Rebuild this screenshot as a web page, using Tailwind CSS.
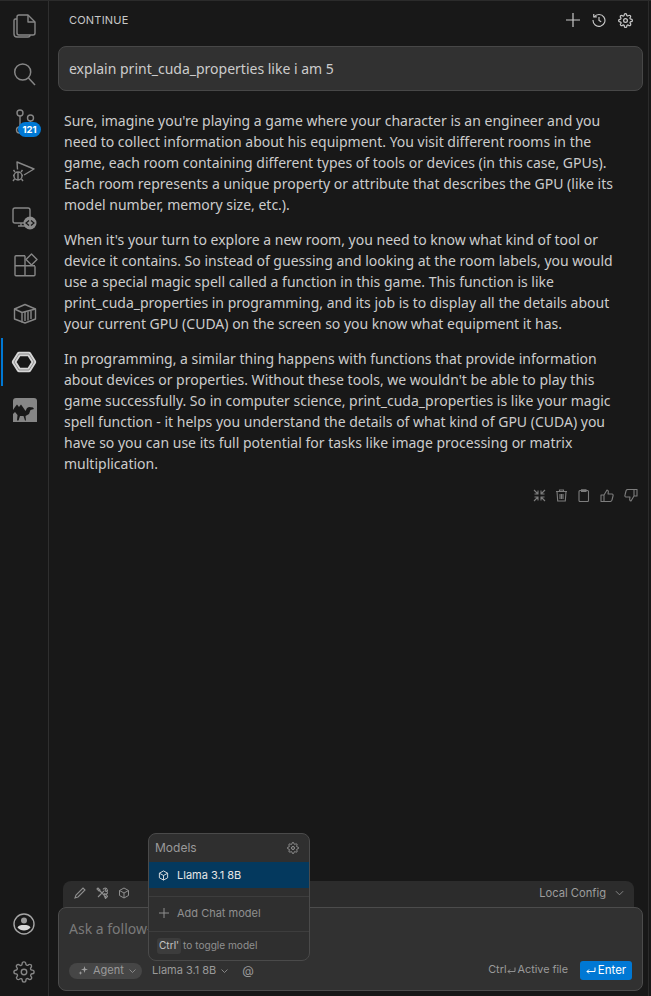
<!DOCTYPE html>
<html lang="en">
<head>
  <meta charset="UTF-8">
  <title>Continue</title>
  <script src="https://cdn.jsdelivr.net/npm/@tailwindcss/browser@4"></script>
</head>
<body class="bg-[#181818] overflow-hidden font-['Noto_Sans',sans-serif]">
<div class="flex h-[996px] w-[651px] border-t border-[#2b2b2b]">

  <!-- activity bar: 48px slots, icons drawn on a 28px box -->
  <nav class="w-[49px] shrink-0 h-full border-r border-[#2f2f2f] flex flex-col text-[#868686] relative">
    <div class="h-[48px] flex items-center justify-center">
      <svg width="28" height="28" viewBox="0 0 28 28" fill="none" stroke="currentColor" stroke-width="1.400" stroke-linejoin="round"><path d="M9 4h9l7 7v11a2 2 0 0 1-2 2H9a2 2 0 0 1-2-2V6a2 2 0 0 1 2-2z"/><path d="M18 4v7h7"/><path d="M7 8H5.500A1.500 1.500 0 0 0 4 9.500V23a3 3 0 0 0 3 3h11a2 2 0 0 0 2-2"/></svg>
    </div>
    <div class="h-[48px] flex items-center justify-center">
      <svg width="28" height="28" viewBox="0 0 28 28" fill="none" stroke="currentColor" stroke-width="1.500"><circle cx="12.700" cy="13" r="8"/><path d="M18.500 19l6.500 7"/></svg>
    </div>
    <div class="h-[48px] flex items-center justify-center">
      <div class="relative w-[28px] h-[28px]">
        <svg width="28" height="28" viewBox="0 0 28 28" fill="none" stroke="currentColor" stroke-width="1.400"><circle cx="10" cy="6" r="3"/><circle cx="20.500" cy="11" r="3"/><path d="M10 9v11"/><path d="M20.500 14c0 4-7 4-10 6"/><circle cx="9.500" cy="23" r="3"/></svg>
        <span class="absolute left-[8px] top-[15px] w-[23px] h-[15px] rounded-full bg-[#0078d4] text-white text-[9.500px] font-bold leading-[15px] text-center font-['Inter',sans-serif]">121</span>
      </div>
    </div>
    <div class="h-[48px] flex items-center justify-center">
      <svg width="28" height="28" viewBox="0 0 28 28" fill="none" stroke="currentColor" stroke-width="1.400" stroke-linejoin="round"><path d="M7.500 14.500L7 7l17 7-10 6"/><circle cx="8" cy="21" r="4"/><path d="M8 17v8M5 17l-1.500-2M11 17l1.500-2M3 20.500h1M12 20.500h1M4.500 24l-1.500 2M11.500 24l1.500 2"/></svg>
    </div>
    <div class="h-[48px] flex items-center justify-center">
      <svg width="28" height="28" viewBox="0 0 28 28" fill="none"><path d="M14 20H5a2 2 0 0 1-2-2V7a2 2 0 0 1 2-2h13a2 2 0 0 1 2 2v7M8 23h7M11 20v3" stroke="currentColor" stroke-width="1.400"/><circle cx="20" cy="20" r="6.500" fill="#8c8c8c"/><path d="M19 17.500l-3 2.500 3 2.500M21 17.500l3 2.500-3 2.500" stroke="#181818" stroke-width="1.200"/></svg>
    </div>
    <div class="h-[48px] flex items-center justify-center">
      <svg width="28" height="28" viewBox="0 0 28 28" fill="none" stroke="currentColor" stroke-width="1.400" stroke-linejoin="round"><path d="M15 4.700H6a1 1 0 0 0-1 1V23.700a1 1 0 0 0 1 1H24a1 1 0 0 0 1-1V15.300M5 14.700H25M15 4.700V24.700"/><path d="M21.500 3l5.500 5.500-5.500 5.500L16 8.500z" fill="#181818"/></svg>
    </div>
    <div class="h-[48px] flex items-center justify-center">
      <svg width="28" height="28" viewBox="0 0 28 28" fill="none" stroke="currentColor" stroke-width="1.400" stroke-linejoin="round"><path d="M4.500 10L15 5.500 25.500 10v10L15 24l-10.500-4z"/><path d="M4.500 10L12 13.500 25.500 10M12 13.500V23.500"/><path d="M15 13v9M18 12.500v9M21 12v8"/></svg>
    </div>
    <div class="h-[48px] flex items-center justify-center">
      <svg width="28" height="28" viewBox="0 0 28 28" fill="none" stroke-linejoin="round"><path d="M9 7h10l5 8-5 8H9l-5-8z" stroke="#d6d6d6" stroke-width="4.400"/><path d="M9 7h10l5 8-5 8H9l-5-8z" stroke="#7c7c7c" stroke-width=".8"/></svg>
    </div>
    <div class="h-[48px] flex items-center justify-center">
      <svg width="28" height="28" viewBox="0 0 28 28"><path d="M3 6a3 3 0 0 1 3-3h18a3 3 0 0 1 3 3v21H3z" fill="#868686"/><path d="M3 15L5 12L7 9.500L9 12L11 9.500L13.500 13L15.500 16L17 13L19 12L23 12.500L24 14L20.500 15L19 19L15.500 21L16 25.500L15 25.500L13.500 21L10 21L8.500 25.500L7 25.500L7.500 20L5 17L3 19Z" fill="#181818"/></svg>
    </div>
    <div class="mt-auto h-[48px] flex items-center justify-center">
      <svg width="22" height="22" viewBox="0 0 22 22" fill="none"><circle cx="11" cy="11" r="10" stroke="#a6a6a6" stroke-width="1.400"/><circle cx="11" cy="7.500" r="3" fill="#9c9c9c"/><path d="M4.500 14.500c1-2 3-2.500 6.500-2.500s5.500.5 6.500 2.500c-1.500 2-4 3-6.500 3s-5-1-6.500-3z" fill="#d8d8d8"/></svg>
    </div>
    <div class="h-[48px] flex items-center justify-center">
      <svg width="22" height="22" viewBox="0 0 24 24" fill="none" stroke="currentColor" stroke-width="1.500" stroke-linejoin="round"><circle cx="12" cy="12" r="3"/><path d="M19.400 15a1.650 1.650 0 0 0 .33 1.820l.06.06a2 2 0 1 1-2.830 2.830l-.06-.06a1.650 1.650 0 0 0-2.800 1.170V21a2 2 0 0 1-4 0v-.09A1.650 1.650 0 0 0 7.300 19.700l-.06.06a2 2 0 1 1-2.830-2.830l.06-.06a1.650 1.650 0 0 0-1.170-2.800H3a2 2 0 0 1 0-4h.09A1.650 1.650 0 0 0 4.300 7.300l-.06-.06a2 2 0 1 1 2.830-2.830l.06.06a1.650 1.650 0 0 0 2.800-1.170V3a2 2 0 0 1 4 0v.09a1.650 1.650 0 0 0 2.800 1.170l.06-.06a2 2 0 1 1 2.830 2.830l-.06.06a1.650 1.650 0 0 0 1.170 2.800H21a2 2 0 0 1 0 4h-.09a1.650 1.650 0 0 0-1.510 1z"/></svg>
    </div>
    <div class="absolute left-[1px] top-[337px] w-[2px] h-[48px] bg-[#0078d4]"></div>
  </nav>

  <!-- panel -->
  <main class="w-[599px] shrink-0 flex flex-col relative">
    <header class="h-[38px] flex items-center pl-[20px] pr-[15px] text-[#c8c8c8]">
      <span class="text-[11px] font-['Inter',sans-serif] tracking-[0.2px]">CONTINUE</span>
      <div class="ml-auto flex items-center gap-[12px]">
        <svg width="14" height="14" viewBox="0 0 14 14" stroke="currentColor" stroke-width="1.200"><path d="M7 0v14M0 7h14"/></svg>
        <svg width="14" height="14" viewBox="0 0 16 16" fill="none" stroke="currentColor" stroke-width="1.300"><path d="M2.500 4.500A6.800 6.800 0 1 1 1.200 8"/><path d="M2 1v3.500h3.500M8 4.500V8.500l2.500 1.500"/></svg>
        <svg width="15" height="15" viewBox="0 0 24 24" fill="none" stroke="currentColor" stroke-width="2" stroke-linejoin="round"><circle cx="12" cy="12" r="3"/><path d="M19.400 15a1.650 1.650 0 0 0 .33 1.820l.06.06a2 2 0 1 1-2.830 2.830l-.06-.06a1.650 1.650 0 0 0-2.800 1.170V21a2 2 0 0 1-4 0v-.09A1.650 1.650 0 0 0 7.300 19.700l-.06.06a2 2 0 1 1-2.830-2.830l.06-.06a1.650 1.650 0 0 0-1.170-2.800H3a2 2 0 0 1 0-4h.09A1.650 1.650 0 0 0 4.300 7.300l-.06-.06a2 2 0 1 1 2.830-2.830l.06.06a1.650 1.650 0 0 0 2.800-1.170V3a2 2 0 0 1 4 0v.09a1.650 1.650 0 0 0 2.800 1.170l.06-.06a2 2 0 1 1 2.830 2.830l-.06.06a1.650 1.650 0 0 0 1.170 2.800H21a2 2 0 0 1 0 4h-.09a1.650 1.650 0 0 0-1.510 1z"/></svg>
      </div>
    </header>

    <div class="ml-[9px] mt-[7px] w-[585px] h-[45px] rounded-[8px] border border-[#474747] bg-[#313131] flex items-center px-[10px] text-[14px] text-[#cccccc]">explain print_cuda_properties like i am 5</div>

    <article class="mt-[19px] ml-[15px] w-[565px] text-[14px] leading-[21px] text-[#cccccc] flex flex-col gap-[14px]">
      <p>Sure, imagine you're playing a game where your character is an engineer and you need to collect information about his equipment. You visit different rooms in the game, each room containing different types of tools or devices (in this case, GPUs). Each room represents a unique property or attribute that describes the GPU (like its model number, memory size, etc.).</p>
      <p>When it's your turn to explore a new room, you need to know what kind of tool or device it contains. So instead of guessing and looking at the room labels, you would use a special magic spell called a function in this game. This function is like print_cuda_properties in programming, and its job is to display all the details about your current GPU (CUDA) on the screen so you know what equipment it has.</p>
      <p>In programming, a similar thing happens with functions that provide information about devices or properties. Without these tools, we wouldn't be able to play this game successfully. So in computer science, print_cuda_properties is like your magic spell function - it helps you understand the details of what kind of GPU (CUDA) you have so you can use its full potential for tasks like image processing or matrix multiplication.</p>
    </article>

    <div class="mt-[15px] mr-[10px] flex justify-end items-center text-[#7d7d7d]">
      <svg width="13" height="13" viewBox="0 0 13 13" fill="none" stroke="currentColor" stroke-width="1.100"><path d="M1 1l4 4M5 1.500V5H1.500M12 1L8 5M8 1.500V5h3.500M1 12l4-4M5 11.500V8H1.500M12 12L8 8M8 11.500V8h3.500"/></svg>
      <svg class="ml-[9px]" width="13" height="13" viewBox="0 0 13 13" fill="none" stroke="currentColor" stroke-width="1.100"><path d="M1 2.500h11M4.500 2.500V1h4v1.500M2 2.500l.7 9.500h7.600l.7-9.500M5 5v5M6.500 5v5M8 5v5"/></svg>
      <svg class="ml-[9px]" width="13" height="13" viewBox="0 0 13 13" fill="none" stroke="currentColor" stroke-width="1.100"><rect x="2" y="1.500" width="9.500" height="11" rx="1"/><path d="M4.500 .7h4.500v1.800H4.500z"/></svg>
      <svg class="ml-[10px]" width="14" height="13" viewBox="0 0 14 13" fill="none" stroke="currentColor" stroke-width="1.100" stroke-linejoin="round"><path d="M4 6l3-5c1.500 0 1.500 1.500 1 4h4c1 0 1.300 1 1 2l-1 4c-.2 1-1 1.500-2 1.500H4zM1 6h3v6.500H1z"/></svg>
      <svg class="ml-[10px]" width="14" height="13" viewBox="0 0 14 13" fill="none" stroke="currentColor" stroke-width="1.100" stroke-linejoin="round"><path d="M10 7l-3 5c-1.500 0-1.500-1.500-1-4H2C1 8 .7 7 1 6l1-4C2.200 1 3 .5 4 .5h6zM13 7h-3V.5h3z"/></svg>
    </div>

    <!-- toolbar + composer -->
    <div class="mt-auto mb-[5px]">
      <div class="ml-[14px] w-[571px] h-[26px] rounded-t-[8px] bg-[#2c2c2c] flex items-center pl-[11px] pr-[10px] pb-[2px] text-[#8f8f8f]">
        <svg width="12" height="12" viewBox="0 0 12 12" fill="none" stroke="currentColor" stroke-width="1.100"><path d="M1 11l1-3 7-7 2 2-7 7z"/></svg>
        <svg class="ml-[10px]" width="12" height="12" viewBox="0 0 12 12" fill="none" stroke="currentColor" stroke-width="1.100"><path d="M2 10L8 4M7 2.500a2.500 2.500 0 0 1 3.500-1L9 3l.5 1 1 .5L11.500 3A2.500 2.500 0 0 1 8 6.500M10 10L3 3M1 2l1-1 2 2-1 1zM8 8l2-1 1.500 2.500-2 2z"/></svg>
        <svg class="ml-[10px]" width="12" height="12" viewBox="0 0 12 12" fill="none" stroke="currentColor" stroke-width="1"><path d="M6 1l4.500 2.500v5L6 11 1.500 8.500v-5zM1.500 3.500L6 6l4.500-2.500M6 6v5"/></svg>
        <span class="ml-auto text-[11.200px] text-[#9d9d9d] font-['Inter',sans-serif]">Local Config</span>
        <svg class="ml-[9px]" width="9" height="6" viewBox="0 0 10 6" fill="none" stroke="currentColor" stroke-width="1"><path d="M1 1l4 4 4-4"/></svg>
      </div>
      <div class="ml-[9px] w-[585px] h-[84px] rounded-[8px] border border-[#4c4c4c] bg-[#313131] px-[10px] flex flex-col">
        <div class="mt-[11px] text-[14px] leading-[20px] text-[#7a7a7a]">Ask a follow-up</div>
        <div class="mt-auto mb-[10px] flex items-center font-['Inter',sans-serif] text-[11px] text-[#9a9a9a]">
          <span class="h-[16px] w-[73px] rounded-full bg-[#464646] flex items-center pl-[9px] gap-[4px]">
            <svg width="11" height="11" viewBox="0 0 11 11" fill="#a0a0a0"><path d="M6.500 1l.8 2.700L10 4.500l-2.700.8L6.500 8l-.8-2.700L3 4.500l2.700-.8zM2.500 6l.5 1.500 1.500.5-1.500.5-.5 1.500L2 8.500.5 8 2 7.500z"/></svg>
            Agent
            <svg class="ml-[1px]" width="7" height="4" viewBox="0 0 7 4" fill="none" stroke="currentColor" stroke-width=".8"><path d="M.5.500l3 3 3-3"/></svg>
          </span>
          <span class="ml-[10px]">Llama 3.1 8B</span>
          <svg class="ml-[5px]" width="7" height="4" viewBox="0 0 7 4" fill="none" stroke="currentColor" stroke-width=".8"><path d="M.5.500l3 3 3-3"/></svg>
          <span class="ml-[14px] text-[12px]">@</span>
          <span class="ml-auto text-[10.800px]">Ctrl</span>
          <svg width="9" height="8" viewBox="0 0 9 8" fill="none" stroke="currentColor" stroke-width=".9"><path d="M8 .5v4H1M3 2.500l-2 2 2 2"/></svg>
          <span class="ml-[2px] mr-[12px] text-[10.800px]">Active file</span>
          <span class="h-[19px] w-[52px] rounded-[3px] bg-[#0078d4] text-white text-[11.500px] flex items-center justify-center gap-[2px]">
            <svg width="10" height="8" viewBox="0 0 10 8" fill="none" stroke="currentColor" stroke-width="1"><path d="M9 .5v4H1M3 2.500l-2 2 2 2"/></svg>
            Enter
          </span>
        </div>
      </div>
    </div>

    <!-- model menu -->
    <div class="absolute left-[99px] top-[832px] w-[162px] h-[128px] rounded-[8px] border border-[#4a4a4a] bg-[#2f2f2f] font-['Inter',sans-serif] flex flex-col overflow-hidden">
      <div class="h-[28px] shrink-0 flex items-center pl-[6px] pr-[10px] text-[12px] text-[#9a9a9a]">
        Models
        <svg class="ml-auto" width="12" height="12" viewBox="0 0 24 24" fill="none" stroke="currentColor" stroke-width="1.900" stroke-linejoin="round"><circle cx="12" cy="12" r="3"/><path d="M19.400 15a1.650 1.650 0 0 0 .33 1.820l.06.06a2 2 0 1 1-2.830 2.830l-.06-.06a1.650 1.650 0 0 0-2.800 1.170V21a2 2 0 0 1-4 0v-.09A1.650 1.650 0 0 0 7.300 19.700l-.06.06a2 2 0 1 1-2.830-2.830l.06-.06a1.650 1.650 0 0 0-1.170-2.800H3a2 2 0 0 1 0-4h.09A1.650 1.650 0 0 0 4.300 7.300l-.06-.06a2 2 0 1 1 2.830-2.830l.06.06a1.650 1.650 0 0 0 2.800-1.170V3a2 2 0 0 1 4 0v.09a1.650 1.650 0 0 0 2.800 1.170l.06-.06a2 2 0 1 1 2.830 2.830l-.06.06a1.650 1.650 0 0 0 1.170 2.800H21a2 2 0 0 1 0 4h-.09a1.650 1.650 0 0 0-1.510 1z"/></svg>
      </div>
      <div class="h-[26px] shrink-0 bg-[#04395e] flex items-center pl-[9px] text-[11px] text-[#e6e6e6]">
        <svg width="11" height="11" viewBox="0 0 12 12" fill="none" stroke="currentColor" stroke-width="1"><path d="M6 1l4.500 2.500v5L6 11 1.500 8.500v-5zM1.500 3.500L6 6l4.500-2.500M6 6v5"/></svg>
        <span class="ml-[8px]">Llama 3.1 8B</span>
      </div>
      <div class="mt-[8px] border-t border-[#3d3d3d]"></div>
      <div class="h-[34px] shrink-0 flex items-center pl-[10px] pb-[2px] text-[11px] text-[#8f8f8f]">
        <svg width="10" height="10" viewBox="0 0 10 10" stroke="currentColor" stroke-width="1"><path d="M5 0v10M0 5h10"/></svg>
        <span class="ml-[8px]">Add Chat model</span>
      </div>
      <div class="border-t border-[#3d3d3d]"></div>
      <div class="flex-1 flex items-center pl-[8px] text-[10.100px] text-[#8f8f8f]">
        <span class="rounded-[3px] bg-[#3c3c3c] px-[2px] text-[#c4c4c4]">Ctrl'</span>
        <span class="ml-[2px]">to toggle model</span>
      </div>
    </div>
  </main>
  <div class="w-[3px] shrink-0 border-l border-[#2b2b2b]"></div>
</div>
</body>
</html>
